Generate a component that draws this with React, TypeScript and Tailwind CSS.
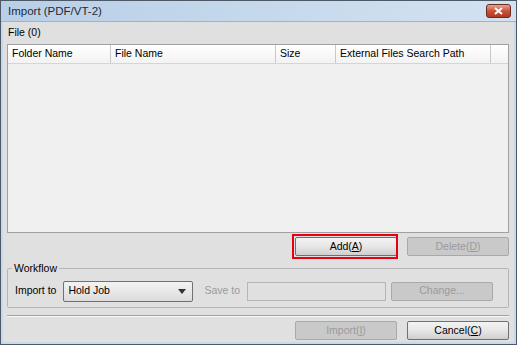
import React from "react";

const font = { fontFamily: '"Liberation Sans", Arial, sans-serif' };

function Btn({ label, mnemonic, suffix, disabled }: { label: string; mnemonic?: string; suffix?: string; disabled?: boolean }) {
  return (
    <div
      className={
        "w-[102px] h-[19px] flex items-center justify-center rounded-[2px] border text-[10.5px] " +
        (disabled
          ? "border-[#a9a9a9] bg-[#c9c9c9] text-[#9b9b9b]"
          : "border-[#707070] bg-gradient-to-b from-[#f4f4f4] via-[#e6e6e6] to-[#cfcfcf] text-black")
      }
    >
      {label}
      {mnemonic && (
        <>
          (<span className="underline">{mnemonic}</span>)
        </>
      )}
      {suffix}
    </div>
  );
}

export default function App() {
  return (
    <div className="w-[517px] h-[345px] flex flex-col border border-[#4d5966] bg-[#e0e0e0]" style={font}>
      <div className="h-[21px] flex items-center justify-between pl-[7px] pr-[5px] bg-gradient-to-r from-[#b8cfe7] to-[#d3e2f1] border-b border-[#9fb3c8]">
        <span className="text-[11.5px] text-[#1e2a38] pt-[2px]">Import (PDF/VT-2)</span>
        <div className="w-[25px] h-[14px] rounded-[3px] border border-[#6b2a22] bg-gradient-to-b from-[#e8a18f] via-[#c9523c] to-[#b13a24] flex items-center justify-center">
          <svg width="9" height="8" viewBox="0 0 9 8">
            <path d="M1 1 L8 7 M8 1 L1 7" stroke="white" strokeWidth="2" />
          </svg>
        </div>
      </div>
      <div className="flex-1 flex flex-col pl-[4px] pr-[5px] border-l-[2px] border-r-[2px] border-b-[2px] border-[#c9d9ea]">
        <div className="h-[22px] flex items-center pl-[1px] text-[10.5px] text-black">File (0)</div>
        <div className="h-[189px] border border-[#a0a0a0] bg-[#f0f0f0] flex flex-col">
          <div className="h-[19px] flex text-[10.5px] text-black bg-gradient-to-b from-[#ffffff] to-[#f3f3f3] border-b border-[#d5d5d5]">
            <div className="w-[103px] border-r border-[#c9c9c9] pl-[4px] flex items-center">Folder Name</div>
            <div className="w-[165px] border-r border-[#c9c9c9] pl-[4px] flex items-center">File Name</div>
            <div className="w-[60px] border-r border-[#c9c9c9] pl-[4px] flex items-center">Size</div>
            <div className="w-[155px] border-r border-[#c9c9c9] pl-[4px] flex items-center">External Files Search Path</div>
            <div className="flex-1" />
          </div>
        </div>
        <div className="mt-[4px] flex justify-end gap-[10px]">
          <div className="relative">
            <Btn label="Add" mnemonic="A" />
            <div className="absolute -left-[3px] -top-[3px] w-[106px] h-[25px] border-2 border-[#e60012]" />
          </div>
          <Btn label="Delete" mnemonic="D" disabled />
        </div>
        <div className="relative mt-[12px] h-[40px] border border-[#b5b5b5] rounded-[2px] flex items-center pl-[7px] pt-[6px] text-[10.5px]">
          <span className="absolute left-[4px] -top-[8px] px-[2px] bg-[#e0e0e0] text-black">Workflow</span>
          <span className="text-black">Import to</span>
          <div className="ml-[7px] w-[130px] h-[21px] border border-[#707070] rounded-[2px] bg-gradient-to-b from-[#f3f3f3] to-[#dcdcdc] flex items-center justify-between pl-[4px] pr-[6px] text-black">
            <span>Hold Job</span>
            <svg width="8" height="5" viewBox="0 0 8 5">
              <path d="M0 0 L8 0 L4 5 Z" fill="#333" />
            </svg>
          </div>
          <span className="ml-[11px] text-[#9b9b9b]">Save to</span>
          <div className="ml-[7px] w-[139px] h-[19px] border border-[#b5b5b5] bg-[#e0e0e0]" />
          <div className="ml-[5px]">
            <Btn label="Change..." disabled />
          </div>
        </div>
        <div className="mt-[7px] h-[2px] border-t border-[#a0a0a0] border-b border-b-[#f8f8f8]" />
        <div className="mt-[4px] flex justify-end gap-[10px]">
          <Btn label="Import" mnemonic="I" disabled />
          <Btn label="Cancel" mnemonic="C" />
        </div>
      </div>
    </div>
  );
}
